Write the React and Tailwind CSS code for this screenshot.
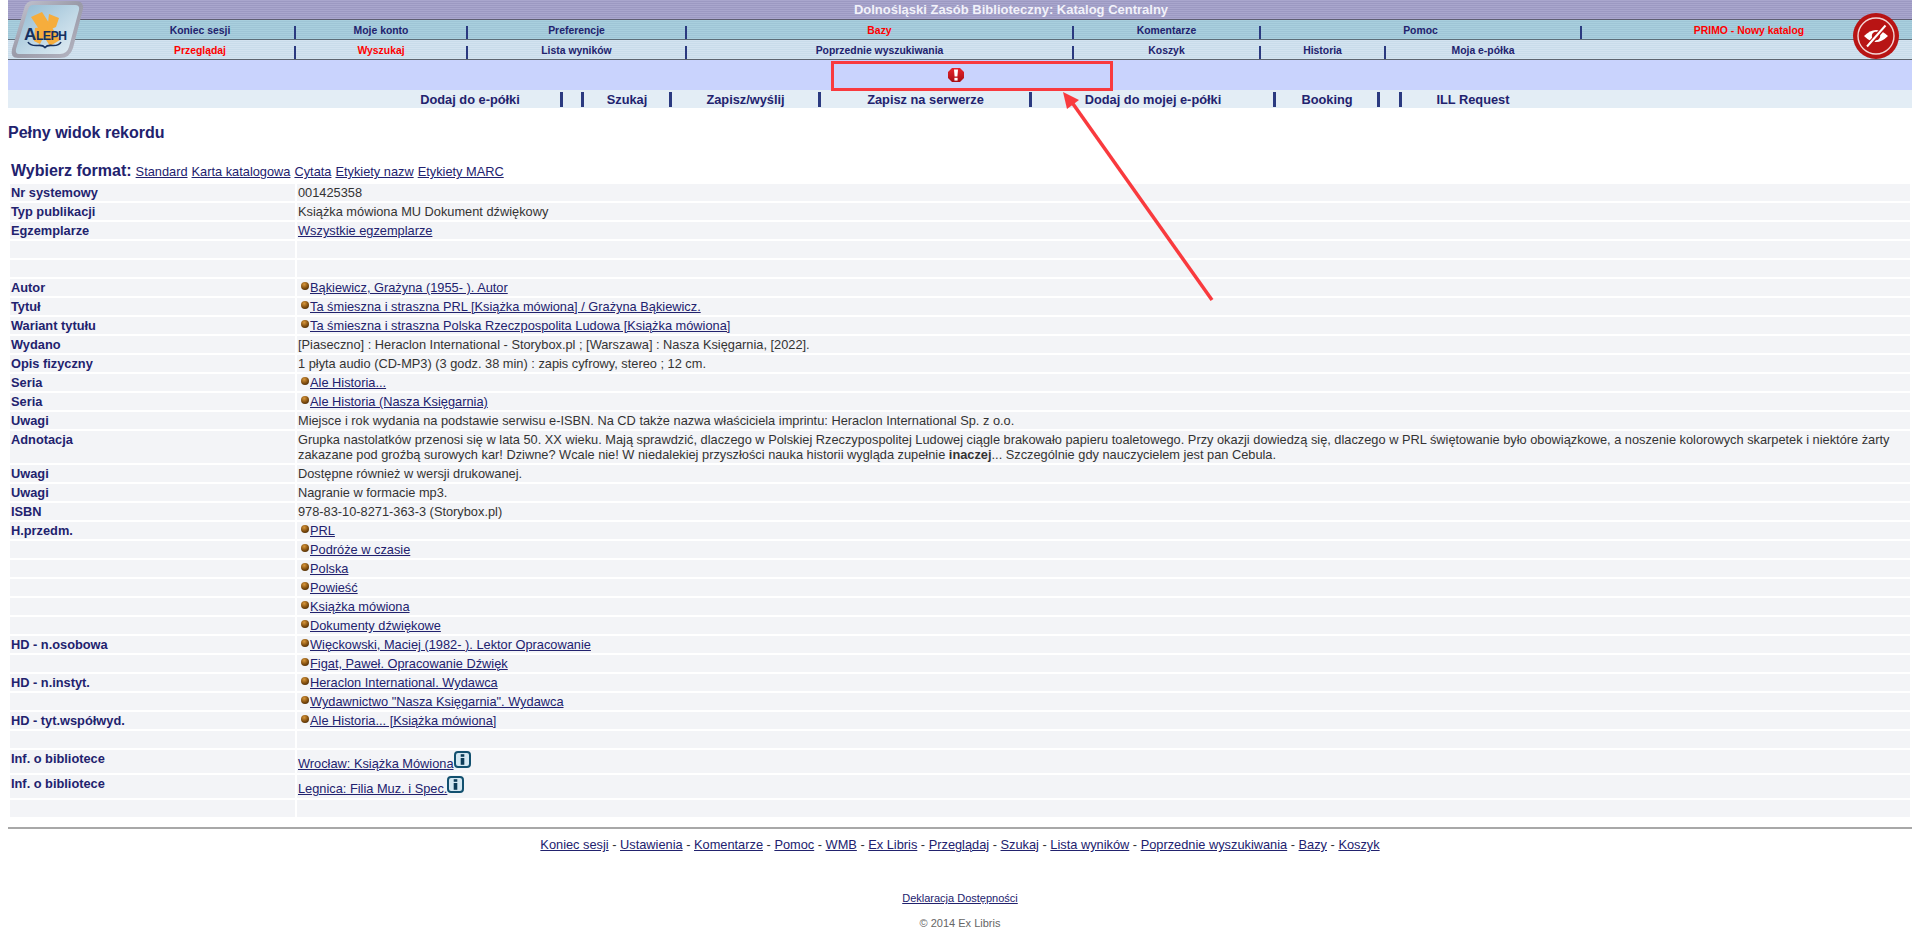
const navy = "text-[#22226e]";

const topRow = [
  { label: "Koniec sesji", w: "w-[287px] pl-[97px]" },
  { label: "Moje konto", w: "w-[172px]" },
  { label: "Preferencje", w: "w-[219px]" },
  { label: "Bazy", w: "w-[387px]", red: true },
  { label: "Komentarze", w: "w-[187px]" },
  { label: "Pomoc", w: "w-[321px]" },
  { label: "PRIMO - Nowy katalog", w: "w-[331px] pl-[5px]", red: true },
];

const secondRow = [
  { label: "Przeglądaj", w: "w-[287px] pl-[97px]", red: true },
  { label: "Wyszukaj", w: "w-[172px]", red: true },
  { label: "Lista wyników", w: "w-[219px]" },
  { label: "Poprzednie wyszukiwania", w: "w-[387px]" },
  { label: "Koszyk", w: "w-[187px]" },
  { label: "Historia", w: "w-[125px]" },
  { label: "Moja e-półka", w: "w-[196px]" },
];

const actions = [
  { label: "Dodaj do e-półki", w: "w-[554px] pl-[370px]" },
  { w: "w-[21px]" },
  { label: "Szukaj", w: "w-[88px]" },
  { label: "Zapisz/wyślij", w: "w-[149px]" },
  { label: "Zapisz na serwerze", w: "w-[211px]" },
  { label: "Dodaj do mojej e-półki", w: "w-[244px]" },
  { label: "Booking", w: "w-[104px]" },
  { w: "w-[22px]" },
  { label: "ILL Request", w: "w-[144px]" },
];

const rows = [
  { label: "Nr systemowy", text: "001425358" },
  { label: "Typ publikacji", text: "Książka mówiona MU Dokument dźwiękowy" },
  { label: "Egzemplarze", link: "Wszystkie egzemplarze" },
  {},
  {},
  { label: "Autor", bullet: "Bąkiewicz, Grażyna (1955- ). Autor" },
  { label: "Tytuł", bullet: "Ta śmieszna i straszna PRL [Książka mówiona] / Grażyna Bąkiewicz." },
  { label: "Wariant tytułu", bullet: "Ta śmieszna i straszna Polska Rzeczpospolita Ludowa [Książka mówiona]" },
  { label: "Wydano", text: "[Piaseczno] : Heraclon International - Storybox.pl ; [Warszawa] : Nasza Księgarnia, [2022]." },
  { label: "Opis fizyczny", text: "1 płyta audio (CD-MP3) (3 godz. 38 min) : zapis cyfrowy, stereo ; 12 cm." },
  { label: "Seria", bullet: "Ale Historia..." },
  { label: "Seria", bullet: "Ale Historia (Nasza Księgarnia)" },
  { label: "Uwagi", text: "Miejsce i rok wydania na podstawie serwisu e-ISBN. Na CD także nazwa właściciela imprintu: Heraclon International Sp. z o.o." },
  { label: "Adnotacja", note: true },
  { label: "Uwagi", text: "Dostępne również w wersji drukowanej." },
  { label: "Uwagi", text: "Nagranie w formacie mp3." },
  { label: "ISBN", text: "978-83-10-8271-363-3 (Storybox.pl)" },
  { label: "H.przedm.", bullet: "PRL" },
  { bullet: "Podróże w czasie" },
  { bullet: "Polska" },
  { bullet: "Powieść" },
  { bullet: "Książka mówiona" },
  { bullet: "Dokumenty dźwiękowe" },
  { label: "HD - n.osobowa", bullet: "Więckowski, Maciej (1982- ). Lektor Opracowanie" },
  { bullet: "Figat, Paweł. Opracowanie Dźwięk" },
  { label: "HD - n.instyt.", bullet: "Heraclon International. Wydawca" },
  { bullet: 'Wydawnictwo "Nasza Księgarnia". Wydawca' },
  { label: "HD - tyt.współwyd.", bullet: "Ale Historia... [Książka mówiona]" },
  {},
  { label: "Inf. o bibliotece", info: "Wrocław: Książka Mówiona" },
  { label: "Inf. o bibliotece", info: "Legnica: Filia Muz. i Spec." },
  {},
];

const footerLinks = [
  "Koniec sesji", "Ustawienia", "Komentarze", "Pomoc", "WMB", "Ex Libris", "Przeglądaj",
  "Szukaj", "Lista wyników", "Poprzednie wyszukiwania", "Bazy", "Koszyk",
];

function NavCell({ item, last }) {
  return (
    <div className={`${item.w} relative flex items-center justify-center pt-[2px]`}>
      <span className={`text-[10.4px] font-bold ${item.red ? "text-[#ff0000]" : navy}`}>{item.label}</span>
      {!last && <span className="absolute right-[-1px] bottom-0 w-[2px] h-[13px] bg-[#2b3a80]" />}
    </div>
  );
}

function ActionCell({ item, last }) {
  return (
    <div className={`${item.w} relative flex items-center justify-center pt-px`}>
      {item.label && <span className={`text-[12.8px] font-bold ${navy}`}>{item.label}</span>}
      {!last && <span className="absolute right-[-1px] top-[2px] w-[3px] h-[15px] bg-[#2b3a80]" />}
    </div>
  );
}

function Ball() {
  return (
    <span className="inline-block w-[8px] h-[8px] ml-[3px] mr-px align-[2px] rounded-full bg-[radial-gradient(circle_at_40%_30%,#d9973a,#7d4b0e_55%,#2f1b04)]" />
  );
}

function InfoIcon() {
  return (
    <svg width="17" height="17" viewBox="0 0 17 17" className="inline-block align-baseline">
      <rect x="1" y="1" width="15" height="15" rx="3" fill="#d5e8f2" stroke="#12506f" strokeWidth="2" />
      <rect x="6.7" y="3.2" width="3.6" height="2.6" fill="#0d3c58" />
      <rect x="6.7" y="7" width="3.6" height="6.8" fill="#0d3c58" />
    </svg>
  );
}

function Value({ row }) {
  const linkCls = `underline ${navy}`;
  if (row.note) {
    return (
      <>
        Grupka nastolatków przenosi się w lata 50. XX wieku. Mają sprawdzić, dlaczego w Polskiej Rzeczypospolitej Ludowej ciągle brakowało papieru toaletowego. Przy okazji dowiedzą się, dlaczego w PRL świętowanie było obowiązkowe, a noszenie kolorowych skarpetek i niektóre żarty zakazane pod groźbą surowych kar! Dziwne? Wcale nie! W niedalekiej przyszłości nauka historii wygląda zupełnie <b>inaczej</b>... Szczególnie gdy nauczycielem jest pan Cebula.
      </>
    );
  }
  if (row.link) return <a className={linkCls}>{row.link}</a>;
  if (row.bullet) {
    return (
      <>
        <Ball />
        <a className={linkCls}>{row.bullet}</a>
      </>
    );
  }
  if (row.info) {
    return (
      <>
        <a className={linkCls}>{row.info}</a>
        <InfoIcon />
      </>
    );
  }
  return row.text || null;
}

function AlephLogo() {
  return (
    <svg width="90" height="62" viewBox="0 0 90 62" className="absolute left-0 top-0">
      <defs>
        <linearGradient id="logoFace" x1="0" y1="0" x2="1" y2="1">
          <stop offset="0" stopColor="#8fb8d0" />
          <stop offset="0.55" stopColor="#c0d8e6" />
          <stop offset="1" stopColor="#e4eef4" />
        </linearGradient>
        <linearGradient id="logoRim" x1="0" y1="0" x2="1" y2="1">
          <stop offset="0" stopColor="#c8c8d4" />
          <stop offset="0.5" stopColor="#9a9aa8" />
          <stop offset="1" stopColor="#b8b8c4" />
        </linearGradient>
      </defs>
      <path d="M32 1 H76 Q84 1 83 9 L73 48 Q70 58 60 58 H18 Q10 58 12 49 L24 9 Q26 1 32 1 Z" fill="url(#logoRim)" />
      <path d="M33 5 H75 Q80 5 79 10 L69 47 Q67 54 60 54 H19 Q15 54 16 49 L28 10 Q29 5 33 5 Z" fill="url(#logoFace)" />
      <path d="M31 17 L42 12 L60 40 L50 46 Z" fill="#f6ad3c" />
      <path d="M49 14 L59 18 L56 27 L47 31 Z" fill="#f6ad3c" />
      <path d="M35 28 L42 27 L45 34 L40 44 L34 41 Z" fill="#f6ad3c" />
      <text x="24" y="40" fontFamily="Liberation Sans, sans-serif" fontSize="17" fontWeight="700" fill="#16305f">A</text>
      <text x="36" y="40" fontFamily="Liberation Sans, sans-serif" fontSize="12.5" fontWeight="700" fill="#16305f" textLength="31">LEPH</text>
      <path d="M28 42 Q30 46 38 45.5 Q43 45 45 47.5 Q47 45 52 45.5 Q59 46 61 42" fill="none" stroke="#16305f" strokeWidth="1.6" />
    </svg>
  );
}

function EyeBadge() {
  return (
    <svg width="46" height="46" viewBox="0 0 46 46" className="absolute left-[1853px] top-[13px]">
      <circle cx="23" cy="23" r="23" fill="#b81414" />
      <circle cx="23" cy="23" r="18" fill="none" stroke="#f3d6d6" strokeWidth="1.4" />
      <path d="M11 23 Q23 11 35 23 Q23 35 11 23 Z" fill="#fff" />
      <circle cx="23" cy="23" r="4.2" fill="#b81414" />
      <path d="M14 34 L33 12" stroke="#b81414" strokeWidth="4.6" />
      <path d="M14 33.5 L32.5 12.5" stroke="#fff" strokeWidth="2" />
    </svg>
  );
}

function ErrorIcon() {
  return (
    <svg width="16" height="14" viewBox="0 0 16 14" className="mb-[2px]">
      <defs>
        <linearGradient id="errFill" x1="0" y1="0" x2="0" y2="1">
          <stop offset="0" stopColor="#e8252c" />
          <stop offset="1" stopColor="#a80d14" />
        </linearGradient>
      </defs>
      <path d="M4 0 H12 L16 4 V10 L12 14 H4 L0 10 V4 Z" fill="url(#errFill)" />
      <path d="M6 1.5 H10 L9.4 8.6 H6.6 Z" fill="#fff" />
      <rect x="6.4" y="9.8" width="3.2" height="2.8" fill="#fff" />
    </svg>
  );
}

function Arrow() {
  return (
    <svg width="170" height="225" viewBox="0 0 170 225" className="absolute left-[1055px] top-[85px]">
      <path d="M157 215 L16 16" stroke="#f93a3e" strokeWidth="3.5" fill="none" />
      <path d="M8 7 L24 15 L12 24 Z" fill="#f93a3e" />
    </svg>
  );
}

export default function App() {
  return (
    <div className="relative min-h-[948px] bg-white font-['Liberation_Sans',Arial,sans-serif] text-[12.8px] text-[#333333]">
      <div className="px-2">
        <div className="h-[20px] border-b border-[#5d5d70] bg-[repeating-linear-gradient(180deg,#a9a6cd_0px,#a9a6cd_1px,#9c99c2_1px,#9c99c2_2px)] flex justify-center pl-[102px]">
          <span className="text-[13px] font-bold text-[#f2f2fa] leading-[19px]">Dolnośląski Zasób Biblioteczny: Katalog Centralny</span>
        </div>
        <div className="h-[20px] border-b border-[#5d6d78] bg-[repeating-linear-gradient(180deg,#a9cfde_0px,#a9cfde_1px,#9fc5d6_1px,#9fc5d6_2px)] flex">
          {topRow.map((item, i) => (
            <NavCell key={item.label} item={item} last={i === topRow.length - 1} />
          ))}
        </div>
        <div className="h-[20px] border-b border-[#5d6570] bg-[repeating-linear-gradient(180deg,#d3e3f0_0px,#d3e3f0_1px,#c9dcea_1px,#c9dcea_2px)] flex">
          {secondRow.map((item, i) => (
            <NavCell key={item.label} item={item} last={i === secondRow.length - 1} />
          ))}
        </div>
        <div className="h-[30px] bg-[#c9d3fd] flex justify-center pl-[24px]">
          <div className="w-[282px] h-[30px] mt-px pr-[32px] border-[3px] border-[#f93a3e] flex items-center justify-center">
            <ErrorIcon />
          </div>
        </div>
        <div className="h-[18px] bg-[#e3edf5] flex">
          {actions.map((item, i) => (
            <ActionCell key={i} item={item} last={i === actions.length - 1} />
          ))}
        </div>

        <h1 className={`mt-[16px] text-[16px] leading-[18px] font-bold ${navy}`}>Pełny widok rekordu</h1>

        <div className="mt-[17px] ml-[3px] h-[18px] flex items-baseline gap-[4px] whitespace-nowrap">
          <span className={`text-[16px] font-bold ${navy}`}>Wybierz format:</span>
          {["Standard", "Karta katalogowa", "Cytata", "Etykiety nazw", "Etykiety MARC"].map((f) => (
            <a key={f} className={`underline ${navy}`}>{f}</a>
          ))}
        </div>

        <div className="mt-[7px] mx-[2px] grid grid-cols-[285px_1fr] gap-x-[2px] gap-y-[2px] leading-[15px]">
          {rows.map((row, i) => (
            <div key={i} className="contents">
              <div className={`bg-[#f3f4f7] min-h-[17px] py-px pl-px font-bold ${navy} ${row.info ? "h-[23px]" : ""}`}>{row.label}</div>
              <div className="bg-[#f3f4f7] min-h-[17px] py-px pl-px">
                <Value row={row} />
              </div>
            </div>
          ))}
        </div>

        <div className="mt-[10px] h-[2px] bg-[#a8a8a8]" />

        <div className="mt-[6px] text-center">
          {footerLinks.map((l, i) => (
            <span key={l}>
              {i > 0 && " - "}
              <a className={`underline ${navy}`}>{l}</a>
            </span>
          ))}
        </div>

        <div className="mt-[36px] text-center text-[11px]">
          <a className={`underline ${navy}`}>Deklaracja Dostępności</a>
        </div>
        <div className="mt-[8px] text-center text-[11px] text-[#666666]">© 2014 Ex Libris</div>
      </div>

      <AlephLogo />
      <EyeBadge />
      <Arrow />
    </div>
  );
}
